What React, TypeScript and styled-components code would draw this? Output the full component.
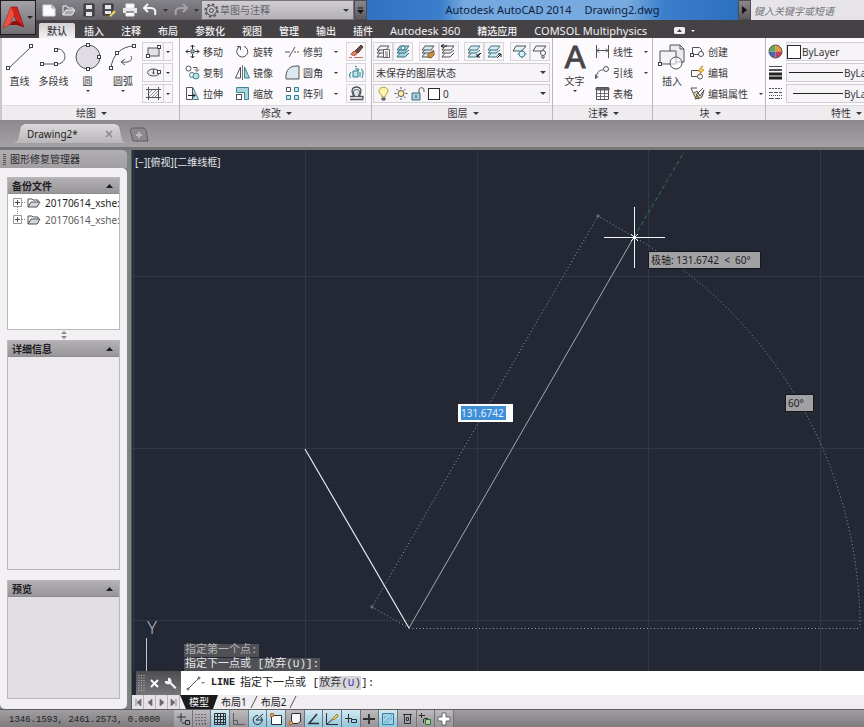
import React from "react";
import styled, { createGlobalStyle, css } from "styled-components";

const GlobalStyle = createGlobalStyle`
  *, *::before, *::after { box-sizing: border-box; }
  body { margin: 0; background: #8f8d90; }
  body, button, input, select {
    font-family: "Noto Sans", "Noto Sans CJK SC", sans-serif;
    font-size: 10px;
    line-height: 14px;
    color: #37373a;
  }
  button { margin: 0; padding: 0; border: 0; background: none; }
  svg { display: block; flex: none; }
  h2, h3 { margin: 0; font-size: 10px; font-weight: 400; }
`;

const mono = css`
  font-family: "Liberation Mono", "Noto Sans CJK SC", monospace;
`;

/* ---------- shell ---------- */

const Shell = styled.div`
  display: flex;
  flex-direction: column;
  min-height: 100vh;
  width: 100%;
  overflow: hidden;
`;

const Header = styled.header`
  display: grid;
  grid-template-columns: 36px minmax(0, 1fr);
  grid-template-rows: 20px 18px;
  background: linear-gradient(#77757a, #5d5b5f 20px, #444245 20px, #444245);
`;

const AppButton = styled.button`
  grid-row: 1 / 3;
  height: 35px;
  display: flex;
  align-items: center;
  justify-content: center;
  gap: 2px;
  border: 1px solid #1e1c20;
  background: linear-gradient(#a3a1a5, #716f73);
`;

const TitleBar = styled.div`
  display: flex;
  min-width: 0;
  background: linear-gradient(#85838a, #656368);
`;

const QuickAccess = styled.div`
  flex: none;
  display: flex;
  align-items: center;
  justify-content: space-between;
  width: 165px;
  padding: 0 2px 0 6px;
`;

const QuickButton = styled.button`
  display: flex;
  align-items: center;
  justify-content: center;
`;

const Workspace = styled.label`
  flex: none;
  display: flex;
  align-items: center;
  gap: 1px;
  width: 153px;
  padding: 0 4px 0 2px;
  border: 1px solid #77757a;
  background: linear-gradient(#d0ced2, #b3b1b5);
`;

const BareSelect = styled.select<{ $color?: string; $size?: number }>`
  flex: 1;
  min-width: 0;
  appearance: none;
  border: 0;
  padding: 0;
  background: transparent;
  color: ${(p) => p.$color ?? "#37373a"};
  font-size: ${(p) => p.$size ?? 10}px;
`;

const BarButton = styled.button<{ $w: number }>`
  flex: none;
  display: flex;
  align-items: center;
  justify-content: center;
  width: ${(p) => p.$w}px;
  border: 1px solid #4e4c50;
  background: linear-gradient(#8a888c, #5b595d);
`;

const WindowTitle = styled.div`
  flex: 1;
  display: flex;
  justify-content: center;
  gap: 13px;
  min-width: 200px;
  font-size: 11px;
  line-height: 20px;
  color: #10203c;
  white-space: nowrap;
  background: linear-gradient(90deg, #2f72c2, #3b7fcb 20%, #74a8df 26%, #78abe0 70%, #3b7fcb 80%, #2b6fbf);
`;

const Search = styled.input`
  flex: none;
  width: 113px;
  border: 0;
  padding: 2px 3px 0;
  background: #e6e4e8;
  font-style: italic;
  &::placeholder { color: #77757a; opacity: 1; }
`;

const RibbonTabs = styled.nav`
  display: flex;
  align-items: stretch;
  gap: 1px;
  padding: 3px 0 0 3px;
  background: #444245;
`;

const RibbonTab = styled.button<{ $active?: boolean; $latin?: boolean }>`
  padding: 0 8px;
  font-size: ${(p) => (p.$latin ? 11 : 10)}px;
  line-height: 14px;
  font-weight: ${(p) => (p.$latin ? 400 : 500)};
  white-space: nowrap;
  color: ${(p) => (p.$active ? "#3a383c" : "#f2f0f3")};
  background: ${(p) => (p.$active ? "linear-gradient(#d2d0d4, #f3f1f4)" : "none")};
  border-radius: 2px 2px 0 0;
`;

const RibbonToggle = styled.button`
  display: flex;
  align-items: center;
  gap: 6px;
  margin-left: 18px;
`;

/* ---------- ribbon ---------- */

const Ribbon = styled.div`
  display: flex;
  height: 82px;
  padding-left: 2px;
  background: #c9c7ca;
  overflow: hidden;
`;

const Panel = styled.section<{ $w: number }>`
  flex: none;
  display: flex;
  flex-direction: column;
  width: ${(p) => p.$w}px;
  border-right: 1px solid #bab8bc;
  background: #fcfafc;
`;

const PanelBody = styled.div`
  flex: 1;
  display: flex;
  padding: 3px 2px 0 1px;
`;

const PanelFoot = styled.h2`
  display: flex;
  align-items: center;
  justify-content: center;
  gap: 5px;
  height: 15px;
  padding-left: 2px;
  border-top: 1px solid #dddbdf;
  background: #efecef;
`;

const BigButton = styled.button<{ $w: number }>`
  display: flex;
  flex-direction: column;
  align-items: center;
  width: ${(p) => p.$w}px;
  height: 63px;
  padding-top: 2px;
  gap: 3px;
  white-space: nowrap;
`;

const BigLabel = styled.span`
  display: flex;
  flex-direction: column;
  align-items: center;
  gap: 2px;
`;

const ToolGrid = styled.div<{ $cols: string }>`
  display: grid;
  grid-template-columns: ${(p) => p.$cols};
  grid-auto-rows: 21px;
  align-items: center;
`;

const ToolButton = styled.button`
  display: flex;
  align-items: center;
  gap: 3px;
  white-space: nowrap;
`;

const ToolText = styled.span`
  margin-right: 8px;
`;

const SplitButton = styled.button`
  display: grid;
  grid-template-columns: 20px 9px;
  place-items: center;
  width: 31px;
  height: 19px;
  border: 1px solid #d3d1d5;
  background: linear-gradient(90deg, transparent 20px, #d3d1d5 20px, #d3d1d5 21px, transparent 21px), #f8f6f8;
`;

const IconButton = styled.button`
  display: flex;
  align-items: center;
  justify-content: center;
  width: 20px;
  height: 19px;
  border: 1px solid #d8d6da;
  background: #f8f6f8;
`;

const LayerStack = styled.div`
  flex: 1;
  display: grid;
  grid-template-rows: 19px 19px 19px;
  row-gap: 2px;
  padding-top: 1px;
  min-width: 0;
`;

const LayerRow = styled.div`
  display: flex;
  justify-content: space-between;
`;

const ButtonPair = styled.div`
  display: flex;
`;

const Combo = styled.label`
  display: flex;
  align-items: center;
  gap: 3px;
  min-width: 0;
  padding: 0 3px 0 2px;
  border: 1px solid #d0ced2;
  background: #f6f4f7;
`;

const Swatch = styled.span<{ $s: number }>`
  flex: none;
  width: ${(p) => p.$s}px;
  height: ${(p) => p.$s}px;
  border: 1px solid #29282b;
  background: #ffffff;
`;

const PropertyGrid = styled.div`
  flex: 1;
  display: grid;
  grid-template-columns: 18px 1fr;
  grid-template-rows: 19px 19px 19px;
  row-gap: 2px;
  align-items: center;
  padding: 1px 0 0 1px;
`;

const PropertyCombo = styled(Combo)`
  height: 19px;
  gap: 1px;
  padding-left: 0;
`;

/* ---------- document tabs ---------- */

const DocumentBar = styled.nav`
  display: flex;
  align-items: flex-end;
  gap: 4px;
  height: 30px;
  padding: 0 0 4px 14px;
  border-bottom: 3px solid #777679;
  background: linear-gradient(#8b898c, #a5a2a5);
`;

const DocumentTab = styled.div`
  display: flex;
  align-items: center;
  justify-content: space-between;
  width: 111px;
  height: 19px;
  padding: 0 12px 0 13px;
  background: linear-gradient(#dad8db, #bab7ba);
  clip-path: polygon(0 100%, 4px 85%, 7px 12%, 11px 0, 101px 0, 105px 12%, 108px 85%, 100% 100%);
`;

const DocumentName = styled.button`
  color: #1f1e21;
`;

/* ---------- workspace ---------- */

const Main = styled.main`
  flex: 1;
  display: grid;
  grid-template-columns: 132px minmax(0, 1fr);
  min-height: 0;
`;

const Palette = styled.aside`
  display: flex;
  flex-direction: column;
  padding-right: 4px;
  border-right: 1px solid #535858;
  background: #7e8482;
`;

const PaletteTitle = styled.h2`
  display: flex;
  align-items: center;
  gap: 4px;
  height: 18px;
  padding-left: 3px;
  border-radius: 0 5px 0 0;
  background: linear-gradient(#b2afb2, #a19ea1);
  color: #2c2b2e;
`;

const PaletteBody = styled.div`
  flex: 1;
  display: grid;
  grid-template-rows: 153px 10px 230px 10px 1fr;
  padding: 9px 7px 10px;
  border-radius: 0 5px 5px 5px;
  background: #f2f0f3;
`;

const Section = styled.section<{ $fill: string }>`
  display: flex;
  flex-direction: column;
  min-width: 0;
  border: 1px solid #b9b7ba;
  background: ${(p) => p.$fill};
  overflow: hidden;
`;

const SectionHead = styled.h3`
  display: flex;
  align-items: center;
  justify-content: space-between;
  height: 16px;
  padding: 0 6px 0 4px;
  border-bottom: 1px solid #8d8b8e;
  background: linear-gradient(#b3b1b4, #989699);
  font-weight: 700;
  color: #1d1c1f;
`;

const Splitter = styled.div`
  display: grid;
  place-items: center;
`;

const FileList = styled.ul`
  margin: 0;
  padding: 0 0 0 5px;
  list-style: none;
`;

const FileRow = styled.li<{ $dim?: boolean }>`
  display: flex;
  align-items: center;
  height: 17px;
  white-space: nowrap;
  color: ${(p) => (p.$dim ? "#5f5d61" : "#1f1e21")};
`;

const FileName = styled.span`
  margin-left: 4px;
`;

const Viewer = styled.div`
  display: flex;
  flex-direction: column;
  min-width: 0;
  background: #232834;
`;

const Canvas = styled.div`
  flex: 1;
  position: relative;
  min-height: 300px;
  overflow: hidden;
`;

const Drawing = styled.svg`
  position: absolute;
  inset: 0;
  width: 100%;
  height: 100%;
`;

const ViewLabels = styled.div`
  position: absolute;
  left: 3px;
  top: 5px;
  display: flex;
  color: #e4e6ea;
`;

const ViewButton = styled.button`
  color: inherit;
`;

const DynamicTip = styled.div<{ $x: number; $y: number; $w: number }>`
  position: absolute;
  left: ${(p) => p.$x}px;
  top: ${(p) => p.$y}px;
  width: ${(p) => p.$w}px;
  height: 18px;
  padding-left: 2px;
  border: 1px solid #16181d;
  background: #a2a1a4;
  color: #1f1f22;
  line-height: 16px;
  white-space: pre;
`;

const LengthInput = styled.input`
  position: absolute;
  left: 326px;
  top: 254px;
  width: 55px;
  height: 18px;
  padding: 0 2px;
  border: 1px solid #ffffff;
  background: linear-gradient(#3f8ed8, #3f8ed8) 2px 1px / 45px 14px no-repeat #ffffff;
  line-height: 16px;
  color: #e4f1ff;
`;

const History = styled.div`
  position: absolute;
  left: 52px;
  bottom: 0;
  display: flex;
  flex-direction: column;
  align-items: flex-start;
  gap: 1px;
`;

const HistoryLine = styled.span<{ $old?: boolean }>`
  ${mono}
  padding: 0 1px;
  font-size: 11px;
  line-height: 13px;
  white-space: pre;
  background: #505156;
  color: ${(p) => (p.$old ? "#b4b4b8" : "#e6e6e8")};
`;

const CommandLine = styled.form`
  display: flex;
  height: 24px;
  padding-left: 4px;
`;

const CommandGrip = styled.div`
  display: flex;
  align-items: center;
  justify-content: space-between;
  width: 45px;
  padding: 0 4px 0 2px;
  background: linear-gradient(#4e4d50, #77757a);
`;

const CommandPrompt = styled.label`
  ${mono}
  display: flex;
  align-items: center;
  padding-left: 5px;
  font-size: 11px;
  white-space: pre;
  background: #ffffff;
  color: #222124;
`;

const CommandName = styled.b`
  margin: 0 5px 0 6px;
  font-size: 10px;
`;

const CommandOption = styled.button`
  ${mono}
  font-size: 11px;
  line-height: 14px;
  background: #d7d6da;
`;

const Hot = styled.span`
  color: #4538b8;
`;

const CommandInput = styled.input`
  flex: 1;
  min-width: 0;
  border: 0;
  outline: 0;
  background: #ffffff;
`;

const LayoutTabs = styled.nav`
  display: flex;
  height: 14px;
  background: #f1eef1;
`;

const NavButton = styled.button`
  display: grid;
  place-items: center;
  width: 12px;
  border-right: 1px solid #b7b5b9;
  background: #e4e2e5;
`;

const LayoutTab = styled.button<{ $active?: boolean }>`
  padding: ${(p) => (p.$active ? "0 9px" : "0 3px")};
  line-height: 13px;
  white-space: nowrap;
  color: ${(p) => (p.$active ? "#f4f4f4" : "#222124")};
  background: ${(p) => (p.$active ? "#1b1b1d" : "none")};
  clip-path: ${(p) => (p.$active ? "polygon(0 0, 100% 0, calc(100% - 5px) 100%, 6px 100%)" : "none")};
`;

/* ---------- status bar ---------- */

const StatusBar = styled.footer`
  display: flex;
  height: 18px;
  border-top: 1px solid #5f5d60;
  background: linear-gradient(#a19ea1, #7e7c7f);
`;

const Coordinates = styled.output`
  ${mono}
  width: 174px;
  padding: 3px 0 0 9px;
  font-size: 9px;
  white-space: pre;
  color: #1f1e21;
`;

const StatusTools = styled.div`
  display: grid;
  grid-template-columns: repeat(15, 1fr);
  width: 280px;
`;

const StatusButton = styled.button<{ $on?: boolean }>`
  display: grid;
  place-items: center;
  border-right: 1px solid #757377;
  background: ${(p) => (p.$on ? "linear-gradient(#d3e9f2, #8fc6dc)" : "linear-gradient(#bebbbe, #97949a)")};
`;

/* ---------- drawings ---------- */

type ArtProps = { w: number; h: number; box?: string; stroke?: string; children: React.ReactNode };

const Art = ({ w, h, box, stroke = "#525257", children }: ArtProps) => (
  <svg width={w} height={h} viewBox={box ?? `0 0 ${w} ${h}`} fill="none" stroke={stroke} strokeWidth="1" aria-hidden="true">
    {children}
  </svg>
);

const Caret = ({ s = 6, up, color = "#37373a" }: { s?: number; up?: boolean; color?: string }) => (
  <svg width={s} height={Math.ceil(s / 2)} viewBox="0 0 6 3" preserveAspectRatio="none" aria-hidden="true">
    <path d={up ? "M0 3 3 0 6 3z" : "M0 0h6L3 3z"} fill={color} />
  </svg>
);

const Node = ({ x, y }: { x: number; y: number }) => (
  <rect x={x - 1.5} y={y - 1.5} width="3" height="3" fill="#fff" stroke="#444448" strokeWidth="1" />
);

const BigLetter = styled.text`
  font-family: "Liberation Sans", sans-serif;
  font-size: 31px;
  fill: #45454a;
  stroke: #45454a;
  stroke-width: 1px;
`;

const OpenSvg = styled.svg`
  overflow: visible;
`;

const bigArt = {
  line: <Art w={28} h={28}><path d="M2 26 26 3" /><Node x={2} y={25} /><Node x={25} y={3} /></Art>,
  polyline: <Art w={28} h={28}><path d="M2 21h14M16 6h3c8 2 8 14-1 15h-2" /><Node x={2} y={21} /><Node x={16} y={21} /><Node x={16} y={7} /></Art>,
  circle: <Art w={28} h={28}><circle cx="14" cy="14" r="12" fill="#dfdde3" /><Node x={14} y={2} /><Node x={14} y={26} /><Node x={25} y={14} /></Art>,
  arc: <Art w={28} h={28}><path d="M2 25C3 13 12 3 25 3" /><path d="M22 13c2 4-1 7-9 6m3-3-4 3 4 3" /><Node x={2} y={25} /><Node x={8} y={10} /><Node x={25} y={3} /></Art>,
  insert: (
    <Art w={28} h={28}>
      <path d="M12 2h10l4 4v13H12z" fill="#ececef" /><path d="M22 2v4h4" />
      <path d="M2 8h16v13H2z" fill="#f3f3f5" /><circle cx="18" cy="20" r="6" fill="#fff" fillOpacity=".6" /><Node x={2} y={21} />
    </Art>
  ),
  text: (
    <OpenSvg width="28" height="28" viewBox="0 0 28 28">
      <BigLetter x="14" y="25" textAnchor="middle">A</BigLetter>
    </OpenSvg>
  ),
};

const tool = {
  move: <Art w={15} h={15}><path d="M7.500 1v4m0 5v4M1 7.500h4m5 0h4M5.500 3l2-2 2 2M5.500 12l2 2 2-2M3 5.500l-2 2 2 2M12 5.500l2 2-2 2" stroke="#2d2d30" /><rect x="6" y="6" width="3" height="3" fill="#9cc" /></Art>,
  rotate: <Art w={15} h={15}><path d="M9 2.300a5.500 5.500 0 1 1-4 .2M2 2.500h3.500V6" /></Art>,
  trim: <Art w={15} h={15}><path d="M0 8h5M10 3 4 13" /><path d="M9 8h6" strokeDasharray="2 1" /></Art>,
  copy: <Art w={15} h={15}><circle cx="3.500" cy="3.500" r="2.500" /><circle cx="7" cy="10" r="2.500" stroke="#3f8394" /><circle cx="11" cy="11" r="3" fill="#bfe0e8" stroke="#3f8394" /><path d="M8 2.500h4v3m-2-1 2 2 2-2" /></Art>,
  mirror: <Art w={15} h={15}><path d="M5.500 2v11H.5z" /><path d="M9.500 2v11h5z" fill="#a9d4de" stroke="#3f7f90" /><path d="M7.500 0v15" strokeWidth=".8" /></Art>,
  fillet: <Art w={15} h={15}><path d="M1 14V11C1 5 5 1 11 1h3v13z" fill="#dce9ec" /></Art>,
  stretch: <Art w={15} h={15}><path d="M1.500 1.500h6v12h-6z" /><path d="M8 1.500 13.500 13.500H8" fill="#bfe0e8" stroke="#3f8394" /><path d="M3 9.500h7M8 7.500l2 2-2 2" stroke="#1d1d20" /></Art>,
  scale: <Art w={15} h={15}><path d="M1.500 1.500h12v12h-4v-7h-8z" fill="#a9d4de" stroke="#3f8394" /><rect x="1.500" y="8.500" width="5" height="5" fill="#fff" /></Art>,
  array: <Art w={15} h={15}><path d="M1.500 1.500h4v4h-4z" fill="#fff" /><path d="M9.500 1.500h4v4h-4zM1.500 9.500h4v4h-4zM9.500 9.500h4v4h-4z" fill="#c9e6ed" stroke="#2f7e92" /></Art>,
  erase: <Art w={15} h={15}><path d="m6 7 6-6 2 2-5 6z" fill="#6c4b40" stroke="#4b3833" /><path d="M3 9c1-2 3-2 4-1l1 1c0 2-3 3-5 2-1 0-1-1 0-2z" fill="#e5865f" stroke="#9f4f35" /><path d="M5 13.500h9M0 13.500h3" stroke="#c46d51" /></Art>,
  explode: <Art w={15} h={15}><path d="M4 6h5v6H4zM6 4h4l-1 2M2 7c-2 3-2 5 0 6M12 4c3 1 2 6 1 9M11 7v5M6 1l2 1" stroke="#23818f" fill="#bfe5ea" /></Art>,
  offset: <Art w={15} h={15}><path d="M1 13.500h13M1 10.500h4C1 4 4 1 7.500 1S14 4 10 10.500h4v3" strokeWidth="1.300" /><path d="M6 10.500h3C12 5 10 3.500 7.500 3.500S3 5 6 10.500z" fill="#cfe5ea" /></Art>,
  rect: <Art w={15} h={13}><rect x="2" y="3" width="11" height="8" fill="#e2e2e5" /><Node x={2} y={11} /><Node x={13} y={2} /></Art>,
  ellipse: <Art w={15} h={13}><ellipse cx="7.500" cy="6.500" rx="6" ry="3.500" fill="#ececef" /><path d="M7.500 3v4" /><circle cx="7.500" cy="7" r=".7" fill="#333" /><Node x={13} y={6} /></Art>,
  hatch: <Art w={15} h={13}><path d="M2.500 0v13M12.500 0v13M0 2.500h15M0 10.500h15" /><path d="M3 6l3-3M3 10l7-7M6 10l6-6M9 10l3-3" strokeWidth=".6" /></Art>,
  linear: <Art w={15} h={15}><path d="M1.500 1v13M13.500 1v13M1 6.500h13M4 4.500l-2 2 2 2M11 4.500l2 2-2 2" /></Art>,
  leader: <Art w={15} h={15}><path d="M1 13C2 7 4 5 8 5M.5 9.500v4l3-2" /><circle cx="11" cy="4" r="2.500" /></Art>,
  table: <Art w={15} h={15}><path d="M1.500 1.500h12v12h-12z" fill="#fff" /><path d="M1 2h13v2H1z" fill="#77777b" /><path d="M1 7.500h13M1 10.500h13M5.500 3v11M9.500 3v11" strokeWidth=".8" /></Art>,
  create: <Art w={15} h={15}><path d="M2.500 3.500h7l2 2v5h-9z" /><circle cx="11" cy="10" r="2.500" fill="#fff" /><Node x={2} y={11} /></Art>,
  edit: <Art w={15} h={15}><path d="M1.500 5.500h9v6h-9z" /><circle cx="10" cy="11.500" r="2.500" fill="#fff" /><path d="M12 1 8 6l3 1-3 4 6-6-3-1 2-3z" fill="#f1c94c" stroke="#bd8f28" strokeWidth=".7" /></Art>,
  attribute: <Art w={15} h={15}><path d="M1 2l4 9 3 2 4-2 2-7-4 6-3-5-3 2" fill="#e9dcae" /><path d="M1 2h6M6 9l7-7" /><path d="M5 13l2-4 2 3z" fill="#e2b63c" /></Art>,
};

const LayersArt = ({ children, tint = "#d7eaee", stroke }: { children?: React.ReactNode; tint?: string; stroke?: string }) => (
  <Art w={15} h={15} stroke={stroke}>
    <path d="M4 9 1 13h8l4-4M4 6 1 9h8l4-3" fill={tint} />
    <path d="M4 2h9l-3 4H1z" fill={tint} />
    {children}
  </Art>
);

const layerArt = [
  <LayersArt key="p" tint="#f4f4f6"><path d="M7.500 5.500h6v8h-6zM9 8h3M9 10h3M9 12h3" fill="#fff" strokeWidth=".9" /></LayersArt>,
  <LayersArt key="c" tint="#a9d4de" stroke="#2f6f80"><circle cx="7" cy="4" r="2" fill="#fff" /></LayersArt>,
  <LayersArt key="m"><path d="M7 10c2-2 4-1 6-3v4l-3 3-3-1z" fill="#c88d45" stroke="#8e5e2d" /></LayersArt>,
  <LayersArt key="r" tint="#f4f4f6"><path d="M0 2h6M3 0 0 2l3 2" stroke="#1d1d20" /></LayersArt>,
  <LayersArt key="i" stroke="#3f7482"><path d="m14 9-4 4m0-3v3h3" stroke="#1d1d20" /></LayersArt>,
  <LayersArt key="u" stroke="#3f7482"><path d="m10 14 4-4m-3 0h3v3" stroke="#1d1d20" /></LayersArt>,
  <Art key="f" w={15} h={15}><path d="M4 2h10l-4 5H1z" fill="#e6f2f4" /><circle cx="10" cy="10" r="3" fill="#d8f0f6" stroke="#39849a" /><path d="M10 5.500v9M5.500 10h9" stroke="#39849a" strokeDasharray="1.500 6" /></Art>,
  <Art key="o" w={15} h={15}><path d="M4 2h10l-4 5H1z" fill="#f3f3f5" /><circle cx="11" cy="9" r="2.500" fill="#fff" /><path d="M10 12v2h2v-2" /></Art>,
];

const quick = [
  <Art key="new" w={14} h={14}><path d="M1 2h9l3 3v8H1z" fill="#fbfbfc" stroke="#d9d9dc" /><path d="M10 2v3h3" stroke="#88888c" /></Art>,
  <Art key="open" w={14} h={14}><path d="M1 12V3h4l1 2h5v2" stroke="#ececee" /><path d="M1 12 4 7h9l-3 5z" fill="#a8a6aa" stroke="#f4f4f4" /></Art>,
  <Art key="save" w={14} h={14}><path d="M2 1h10v12H2z" fill="#4b4b4f" stroke="#303033" /><path d="M4 2h6v4H4zM4 9h6v4H4z" fill="#e6e6e8" stroke="none" /></Art>,
  <Art key="saveas" w={14} h={14}><path d="M1 1h10v11H1z" fill="#4b4b4f" stroke="#303033" /><path d="M3 2h6v4H3zM3 8h6v3H3z" fill="#e6e6e8" stroke="none" /><path d="m7 13 5-6 2 2-5 5z" fill="#ecd36c" stroke="#8d7d3c" strokeWidth=".6" /></Art>,
  <Art key="print" w={14} h={14}><path d="M3 1h8v4H3zM3 9h8v4H3z" fill="#fff" stroke="#e8e8ea" /><path d="M0 5h14v5H0z" fill="#e6e6e8" stroke="none" /><path d="M3 9h8" stroke="#4a4a4e" /></Art>,
  <Art key="undo" w={14} h={14}><path d="M2 5h6c4 0 5 3 4 7M5 1 1 5l4 4" stroke="#f5f5f6" strokeWidth="2" /></Art>,
  <Caret key="c1" s={5} color="#38363a" />,
  <Art key="redo" w={14} h={14}><path d="M12 5H6c-4 0-5 3-4 7M9 1l4 4-4 4" stroke="#a5a3a8" strokeWidth="2" /></Art>,
  <Caret key="c2" s={5} color="#38363a" />,
];

const quickNames = ["新建", "打开", "保存", "另存为", "打印", "放弃", "放弃列表", "重做", "重做列表"];

const statusArt: { name: string; on?: boolean; art: React.ReactNode }[] = [
  { name: "推断约束", art: <path d="M5 1v9M1 5h9M9.500 8.500h4v4h-4zM6 11h3" /> },
  { name: "捕捉模式", art: <path d="M2 2v9M5 2v9M8 2v9M2 12h10M11 2v10" strokeDasharray="1 2" /> },
  { name: "栅格显示", on: true, art: <path d="M1.500 1.500h11v11h-11zM1 4.500h12M1 7.500h12M1 10.500h12M4.500 1v12M7.500 1v12M10.500 1v12" /> },
  { name: "正交模式", art: <path d="M1.500 1v11.500H13M1 8.500h4.500V13" stroke="#5d5b60" /> },
  { name: "极轴追踪", on: true, art: <path d="M13 2 6 8h7M11 5a4.500 4.500 0 1 1-3-1.500" /> },
  { name: "对象捕捉", on: true, art: <><path d="M2.500 3.500h10v9h-10z" fill="#fff" /><path d="M1.500 1.500h3v3h-3z" fill="#e7a457" stroke="#ad6d30" /></> },
  { name: "三维对象捕捉", art: <><path d="M4 1.500h8.500V9L10 11.500H3.500V3z" fill="#f7f5f8" /><path d="M1.500 9.500h3v3h-3z" fill="#e7a457" stroke="#ad6d30" /></> },
  { name: "对象捕捉追踪", on: true, art: <path d="M11 2 3 11.500h10" strokeWidth="1.500" /> },
  { name: "动态 UCS", on: true, art: <><path d="M1.500 1v11.500H13M2 12l6-5" /><path d="m7 7 5-5 1 2-4 4z" fill="#f0cc58" stroke="#99803a" /></> },
  { name: "动态输入", on: true, art: <path d="M1 6.500h7M4.500 2v9M7.500 7.500h5v3h-5z" /> },
  { name: "显示线宽", art: <path d="M1 7h12M7 2v10" strokeWidth="1.800" /> },
  { name: "透明度", on: true, art: <><path d="M1.500 1.500h11v11h-11z" fill="#9ed2e9" stroke="#3a7fa1" /><path d="M3 6l3-3M3 11l8-8M6 11l5-5" strokeDasharray="1 1" stroke="#3a7fa1" /></> },
  { name: "快捷特性", art: <path d="M4.500 2.500h6v9h-6zM6.500 5.500h2v3h-2zM3 2.500h9" /> },
  { name: "选择循环", art: <><path d="M1 3.500h6M3.500 1v5M6 6.500h4M5.500 7v4" /><path d="M7.500 7.500h5v5h-5z" fill="#a8d49e" stroke="#2e7030" /></> },
  { name: "注释监视器", art: <path d="M5 1h4v4h4v4H9v4H5V9H1V5h4z" fill="#fff" stroke="#68666a" /> },
];

const Folder = () => (
  <Art w={14} h={11}><path d="M1 10V2h4l1 1h5v2" /><path d="M1 10 4 5h9l-3 5z" fill="#d6d6d9" /></Art>
);

const TreeBranch = ({ last }: { last?: boolean }) => (
  <Art w={14} h={17}>
    <path d={last ? "M4.500 0v4M9 8.500h4" : "M4.500 13v4M9 8.500h4"} stroke="#8f8d91" strokeDasharray="1 1" />
    <path d="M.5 4.500h8v8h-8z" stroke="#99979b" />
    <path d="M2 8.500h5M4.500 6v5" stroke="#4a4a4e" />
  </Art>
);

/* ---------- pieces ---------- */

const Big = ({ w, art, label, caret }: { w: number; art: React.ReactNode; label: string; caret?: boolean }) => (
  <BigButton $w={w}>{art}<BigLabel>{label}{caret && <Caret s={4} />}</BigLabel></BigButton>
);

const Tool = ({ art, label, caret }: { art: React.ReactNode; label: string; caret?: boolean }) => (
  <ToolButton>{art}<ToolText>{label}</ToolText>{caret && <Caret s={4} />}</ToolButton>
);

const RibbonPanel = ({ w, title, children }: { w: number; title: string; children: React.ReactNode }) => (
  <Panel $w={w}><PanelBody>{children}</PanelBody><PanelFoot>{title}<Caret /></PanelFoot></Panel>
);

const tabs = ["默认", "插入", "注释", "布局", "参数化", "视图", "管理", "输出", "插件", "Autodesk 360", "精选应用", "COMSOL Multiphysics"];

const majorX = [133, 305, 477, 648, 820];
const majorY = [276, 448, 620];
const minorX = Array.from({ length: 22 }, (_, i) => Math.round(133.5 + i * 34.35));
const minorY = Array.from({ length: 16 }, (_, i) => Math.round(173 + i * 34.35));

function ModelSpace() {
  return (
    <Drawing viewBox="132 150 732 521" preserveAspectRatio="xMinYMin slice" fill="none" aria-label="模型空间">
      <g stroke="#252b37">
        {minorX.map((x) => <path key={x} d={`M${x}.5 150v521`} />)}
        {minorY.map((y) => <path key={y} d={`M132 ${y}.5h732`} />)}
      </g>
      <g stroke="#313743">
        {majorX.map((x) => <path key={x} d={`M${x}.5 150v521`} />)}
        {majorY.map((y) => <path key={y} d={`M132 ${y}.5h732`} />)}
      </g>
      <g stroke="#9a9da5" strokeDasharray="1 2.500">
        <path d="M409 628 372 607 598 216 634 237" />
        <path d="M409 628.500H860" />
        <path d="M634 237A451 451 0 0 1 860 628" />
      </g>
      <path d="M598 214v4M596 216h4M372 605v4M370 607h4" stroke="#777b84" />
      <path d="M634 237 684 152" stroke="#2f7d49" strokeDasharray="4 3" />
      <path d="M409 628 634 237" stroke="#a6a8ae" />
      <path d="M305 449 409 628" stroke="#e9eaee" strokeWidth="1.200" />
      <path d="M604 237.500h61M634.500 207v61" stroke="#f4f5f6" />
      <path d="m631 234 7 7m0-7-7 7" stroke="#f4f5f6" />
      <path d="M146.500 638v33" stroke="#c4c6cb" />
      <text x="147" y="634" fill="#d0d2d7" fontFamily="Lato, sans-serif" fontWeight="300" fontSize="17">Y</text>
    </Drawing>
  );
}

export default function App() {
  return (
    <Shell>
      <GlobalStyle />
      <Header>
        <AppButton aria-label="应用程序菜单">
          <Art w={22} h={26}>
            <path d="M8 2h6l7 20-6-2-4-10-5 10-6 3z" fill="#d6221c" stroke="#8b1310" strokeWidth=".7" />
            <path d="M8 2 0 23l6-3 5-10z" fill="#ef5140" stroke="none" /><path d="m6 20 4-4h5l6 6-7-2H9z" fill="#94100f" stroke="none" />
          </Art>
          <Caret s={6} color="#29282b" />
        </AppButton>
        <TitleBar>
          <QuickAccess>{quick.map((art, i) => <QuickButton key={i} aria-label={quickNames[i]}>{art}</QuickButton>)}</QuickAccess>
          <Workspace>
            <Art w={15} h={15}><circle cx="7.500" cy="7.500" r="2" /><circle cx="7.500" cy="7.500" r="5" /><circle cx="7.500" cy="7.500" r="6.300" strokeWidth="1.600" strokeDasharray="2.500 2.400" /></Art>
            <BareSelect aria-label="工作空间" $color="#646267"><option>草图与注释</option></BareSelect>
            <Caret />
          </Workspace>
          <BarButton $w={13} aria-label="自定义快速访问工具栏">
            <Art w={7} h={7}><path d="M1 1h5" stroke="#151517" /><path d="M0 3h7L3.500 7z" fill="#151517" stroke="none" /></Art>
          </BarButton>
          <WindowTitle><span>Autodesk AutoCAD 2014</span><span>Drawing2.dwg</span></WindowTitle>
          <BarButton $w={13} aria-label="展开搜索"><Art w={5} h={8}><path d="M0 0l5 4-5 4z" fill="#111" stroke="none" /></Art></BarButton>
          <Search aria-label="搜索" placeholder="键入关键字或短语" />
        </TitleBar>
        <RibbonTabs>
          {tabs.map((t, i) => <RibbonTab key={t} $active={i === 0} $latin={/^[A-Z]/.test(t)}>{t}</RibbonTab>)}
          <RibbonToggle aria-label="最小化功能区">
            <Art w={11} h={7}><rect width="11" height="7" rx="1.500" fill="#f0eef1" stroke="none" /><path d="M3 5l2.500-3L8 5z" fill="#444245" stroke="none" /></Art>
            <Caret s={4} color="#f0eef1" />
          </RibbonToggle>
        </RibbonTabs>
      </Header>

      <Ribbon>
        <RibbonPanel w={178} title="绘图">
          <Big w={33} art={bigArt.line} label="直线" />
          <Big w={35} art={bigArt.polyline} label="多段线" />
          <Big w={33} art={bigArt.circle} label="圆" caret />
          <Big w={38} art={bigArt.arc} label="圆弧" caret />
          <ToolGrid $cols="31px">
            <SplitButton aria-label="矩形">{tool.rect}<Caret s={4} /></SplitButton>
            <SplitButton aria-label="椭圆">{tool.ellipse}<Caret s={4} /></SplitButton>
            <SplitButton aria-label="图案填充">{tool.hatch}<Caret s={4} /></SplitButton>
          </ToolGrid>
        </RibbonPanel>
        <RibbonPanel w={192} title="修改">
          <ToolGrid $cols="4px 50px 50px 61px 20px">
            <span /><Tool art={tool.move} label="移动" /><Tool art={tool.rotate} label="旋转" /><Tool art={tool.trim} label="修剪" caret /><IconButton aria-label="删除">{tool.erase}</IconButton>
            <span /><Tool art={tool.copy} label="复制" /><Tool art={tool.mirror} label="镜像" /><Tool art={tool.fillet} label="圆角" caret /><IconButton aria-label="分解">{tool.explode}</IconButton>
            <span /><Tool art={tool.stretch} label="拉伸" /><Tool art={tool.scale} label="缩放" /><Tool art={tool.array} label="阵列" caret /><IconButton aria-label="偏移">{tool.offset}</IconButton>
          </ToolGrid>
        </RibbonPanel>
        <RibbonPanel w={181} title="图层">
          <LayerStack>
            <LayerRow>
              {[0, 2, 4, 6].map((n) => (
                <ButtonPair key={n}>
                  <IconButton aria-label={`图层工具 ${n + 1}`}>{layerArt[n]}</IconButton>
                  <IconButton aria-label={`图层工具 ${n + 2}`}>{layerArt[n + 1]}</IconButton>
                </ButtonPair>
              ))}
            </LayerRow>
            <Combo><BareSelect aria-label="图层状态"><option>未保存的图层状态</option></BareSelect><Caret /></Combo>
            <Combo>
              <Art w={15} h={15}><path d="M6 11c0-3-3-3-3-6 0-5 9-5 9 0 0 3-3 3-3 6z" fill="#fff3a8" stroke="#b39d46" /><path d="M6 12h3v2H6z" fill="#77777b" /></Art>
              <Art w={14} h={15}><circle cx="7" cy="7.500" r="3" fill="#fff0a0" /><path d="M7 1v2m0 9v2M.5 7.500h2m9 0h2M2.500 3 4 4.500m6 6 1.500 1.500M2.500 12 4 10.500m6-6L11.500 3" /></Art>
              <Art w={14} h={15}><path d="M1 7h8v7H1z" fill="#a6d3de" stroke="#3a6f7e" /><path d="M8 7V4c0-3 5-3 5 0v2" /><path d="M5 9v3" /></Art>
              <Swatch $s={12} />
              <BareSelect aria-label="图层"><option>0</option></BareSelect><Caret />
            </Combo>
          </LayerStack>
        </RibbonPanel>
        <RibbonPanel w={100} title="注释">
          <Big w={42} art={bigArt.text} label="文字" caret />
          <ToolGrid $cols="55px">
            <Tool art={tool.linear} label="线性" caret /><Tool art={tool.leader} label="引线" caret /><Tool art={tool.table} label="表格" />
          </ToolGrid>
        </RibbonPanel>
        <RibbonPanel w={113} title="块">
          <Big w={36} art={bigArt.insert} label="插入" />
          <ToolGrid $cols="73px">
            <Tool art={tool.create} label="创建" /><Tool art={tool.edit} label="编辑" /><Tool art={tool.attribute} label="编辑属性" caret />
          </ToolGrid>
        </RibbonPanel>
        <RibbonPanel w={160} title="特性">
          <PropertyGrid>
            <Art w={15} h={15}><g stroke="none"><path d="M7.500 7.500V1A6.500 6.500 0 0 1 14 7.500z" fill="#e79b35" /><path d="M7.500 7.500H14A6.500 6.500 0 0 1 7.500 14z" fill="#c83e53" /><path d="M7.500 7.500V14A6.500 6.500 0 0 1 1 7.500z" fill="#4968b5" /><path d="M7.500 7.500H1A6.500 6.500 0 0 1 7.500 1z" fill="#67a958" /></g><circle cx="7.500" cy="7.500" r="6.500" stroke="#555" /></Art>
            <PropertyCombo><Swatch $s={14} /><BareSelect aria-label="对象颜色"><option>ByLayer</option></BareSelect></PropertyCombo>
            <Art w={15} h={15}><path d="M1 1.500h13" /><path d="M1 5h13" strokeWidth="2" /><path d="M1 9h13M1 13h13" stroke="#222" strokeWidth="3" /></Art>
            <PropertyCombo><Art w={56} h={8}><path d="M2 3.500h54" stroke="#222" /></Art><BareSelect aria-label="线宽"><option>ByLayer</option></BareSelect></PropertyCombo>
            <Art w={15} h={15}><path d="M1 2.500h13" strokeDasharray="2 1" /><path d="M1 6.500h13" strokeDasharray="4 1" /><path d="M1 9.500h13" strokeDasharray="1 1" /><path d="M1 12.500h13" strokeDasharray="5 1" /></Art>
            <PropertyCombo><Art w={56} h={8}><path d="M6 3.500h50" stroke="#222" /></Art><BareSelect aria-label="线型"><option>ByLayer</option></BareSelect></PropertyCombo>
          </PropertyGrid>
        </RibbonPanel>
      </Ribbon>

      <DocumentBar>
        <DocumentTab>
          <DocumentName>Drawing2*</DocumentName>
          <QuickButton aria-label="关闭"><Art w={8} h={8}><path d="m1 1 6 6m0-6-6 6" stroke="#8b898d" strokeWidth="1.500" /></Art></QuickButton>
        </DocumentTab>
        <QuickButton aria-label="新图形">
          <Art w={20} h={16}><path d="M3 1h12l2 2 2 11H4L1 3z" fill="#8b898c" stroke="#605e62" /><path d="M10 5v6M7 8h6" stroke="#bcbabd" strokeWidth="2" /></Art>
        </QuickButton>
      </DocumentBar>

      <Main>
        <Palette>
          <PaletteTitle><Art w={3} h={11}><path d="M1.500 0v11" strokeDasharray="1 1" strokeWidth="3" /></Art>图形修复管理器</PaletteTitle>
          <PaletteBody>
            <Section $fill="#ffffff">
              <SectionHead>备份文件<Caret up s={7} color="#1d1c1f" /></SectionHead>
              <FileList>
                <FileRow><TreeBranch /><Folder /><FileName>20170614_xshe:</FileName></FileRow>
                <FileRow $dim><TreeBranch last /><Folder /><FileName>20170614_xshe:</FileName></FileRow>
              </FileList>
            </Section>
            <Splitter><Art w={8} h={8}><path d="M1 3 4 0l3 3zM1 5h6L4 8z" fill="#88868a" stroke="none" /></Art></Splitter>
            <Section $fill="#edebee"><SectionHead>详细信息<Caret up s={7} color="#1d1c1f" /></SectionHead></Section>
            <span />
            <Section $fill="#e1dfe3"><SectionHead>预览<Caret up s={7} color="#1d1c1f" /></SectionHead></Section>
          </PaletteBody>
        </Palette>

        <Viewer>
          <Canvas>
            <ModelSpace />
            <ViewLabels><ViewButton>[−]</ViewButton><ViewButton>[俯视]</ViewButton><ViewButton>[二维线框]</ViewButton></ViewLabels>
            <DynamicTip $x={516} $y={101} $w={113}>极轴: 131.6742  &lt;  60°</DynamicTip>
            <DynamicTip $x={653} $y={244} $w={29}>60°</DynamicTip>
            <LengthInput aria-label="长度" defaultValue="131.6742" />
            <History>
              <HistoryLine $old>指定第一个点:</HistoryLine>
              <HistoryLine>指定下一点或 [放弃(U)]:</HistoryLine>
            </History>
          </Canvas>
          <CommandLine>
            <CommandGrip>
              <Art w={7} h={16}><path d="M1 0v16M3.500 0v16M6 0v16" stroke="#bdbbbf" strokeDasharray="1 1.500" /></Art>
              <QuickButton type="button" aria-label="关闭命令行"><Art w={9} h={9}><path d="m1 1 7 7m0-7-7 7" stroke="#fff" strokeWidth="2" /></Art></QuickButton>
              <QuickButton type="button" aria-label="自定义"><Art w={13} h={13}><path d="M4 1v3H1C0 7 4 8 6 7l5 5 1.500-1.500-5-5C8 3 6 0 4 1z" fill="#f3f2f4" stroke="none" /></Art></QuickButton>
            </CommandGrip>
            <CommandPrompt htmlFor="command">
              <Art w={15} h={15}><path d="M2 13 13 2" /><circle cx="2" cy="13" r="1" /><circle cx="13" cy="2" r="1" /></Art>
              <Caret s={4} color="#88868a" />
              <CommandName>LINE</CommandName>指定下一点或 [<CommandOption type="button">放弃(<Hot>U</Hot>)</CommandOption>]:
            </CommandPrompt>
            <CommandInput id="command" />
          </CommandLine>
          <LayoutTabs>
            {["M2 0v7M7 0 3 3.500 7 7z", "M6 0 2 3.500 6 7z", "M2 0l4 3.500L2 7z", "M6 0v7M1 0l4 3.500L1 7z"].map((d, i) => (
              <NavButton key={d} aria-label={["首个", "上一个", "下一个", "末个"][i]}><Art w={8} h={7}><path d={d} fill="#6b696e" stroke="#6b696e" strokeWidth=".7" /></Art></NavButton>
            ))}
            <LayoutTab $active>模型</LayoutTab>
            <LayoutTab>布局1</LayoutTab>
            <Art w={8} h={13}><path d="M1 13 7 1" /></Art>
            <LayoutTab>布局2</LayoutTab>
            <Art w={8} h={13}><path d="M1 13 7 1" /></Art>
          </LayoutTabs>
        </Viewer>
      </Main>

      <StatusBar>
        <Coordinates>1346.1593, 2461.2573, 0.0000</Coordinates>
        <StatusTools>
          {statusArt.map((s) => (
            <StatusButton key={s.name} $on={s.on} aria-label={s.name}><Art w={14} h={14} stroke="#2f2e32">{s.art}</Art></StatusButton>
          ))}
        </StatusTools>
      </StatusBar>
    </Shell>
  );
}
